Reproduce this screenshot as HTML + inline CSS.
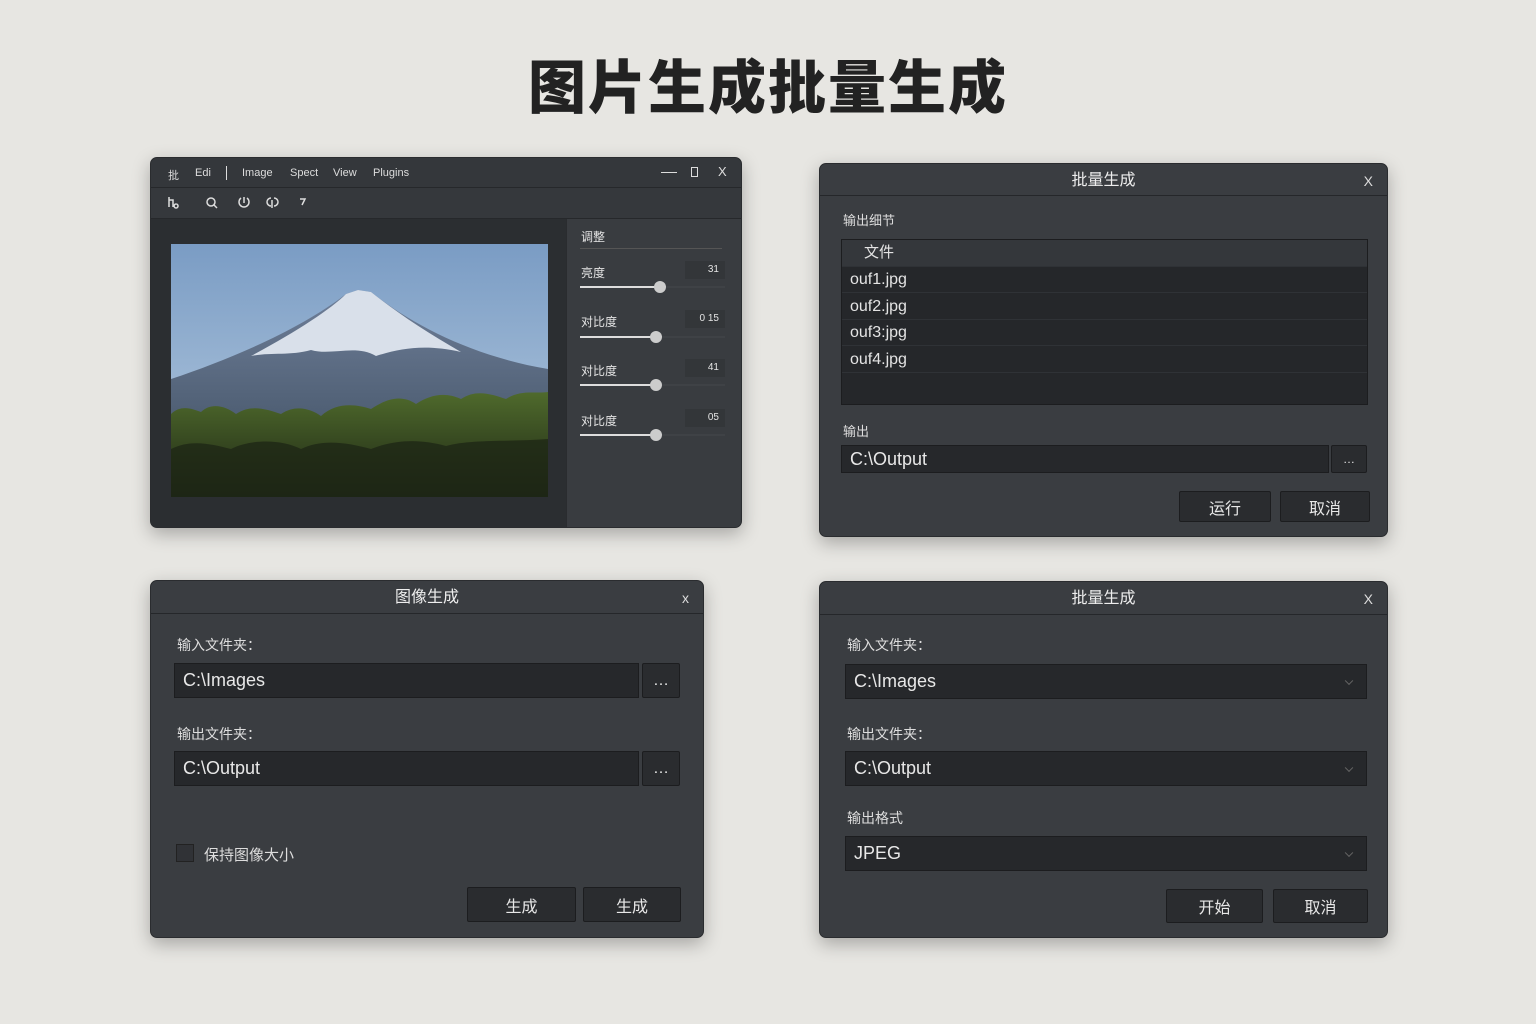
<!DOCTYPE html>
<html><head><meta charset="utf-8">
<style>
*{box-sizing:border-box;margin:0;padding:0}
body{width:1536px;height:1024px;background:#e7e6e2;position:relative;overflow:hidden;font-family:"Liberation Sans","Noto Sans CJK SC",sans-serif;color:#e4e4e4}
.a{position:absolute}
h1{position:absolute;left:0;width:1536px;top:38px;text-align:center;font-size:58px;font-weight:900;color:#222;letter-spacing:2px;font-family:"Noto Sans CJK SC",sans-serif;line-height:90px}
.win{position:absolute;background:#3a3d41;border-radius:7px;box-shadow:0 6px 18px rgba(0,0,0,.28);overflow:hidden;border:1px solid #2a2c2f}
.tb{position:absolute;left:0;right:0;top:0;border-bottom:1px solid #25272a;text-align:center;font-size:16px;color:#eee}
.x{position:absolute;right:14px;font-size:14px;color:#ddd}
.lbl{position:absolute;font-size:14px;color:#ddd}
.inp{position:absolute;background:#26282b;border:1px solid #1c1d1f;color:#e8e8e8;font-size:18px;padding-left:8px;display:flex;align-items:center}
.btn{position:absolute;background:#2a2c2f;border:1px solid #1c1d1f;color:#e8e8e8;font-size:16px;display:flex;align-items:center;justify-content:center;border-radius:2px}
.chev{position:absolute;right:14px;top:50%;width:6px;height:6px;border-right:1.5px solid #666;border-bottom:1.5px solid #666;transform:translateY(-70%) rotate(45deg)}
.row{position:absolute;left:0;right:0;height:26px;border-bottom:1px solid #2f3236;font-size:16px;padding-left:8px;line-height:26px;background:#25272a}
.sl{position:absolute;left:13px;width:145px;height:2px;background:#3f4246}
.slf{position:absolute;left:0;top:0;height:2px;background:#ddd}
.kn{position:absolute;top:-5px;width:12px;height:12px;border-radius:50%;background:#ccc}
.val{position:absolute;right:18px;width:40px;height:18px;background:#333639;font-size:10px;text-align:right;padding-right:6px;line-height:18px}
</style></head><body>
<h1>图片生成批量生成</h1>

<!-- Window 1 -->
<div class="win" style="left:150px;top:157px;width:592px;height:371px;background:#33363a">
 <div class="a" style="left:0;top:0;width:592px;height:30px;background:#34373b;border-bottom:1px solid #26282b;font-size:11px;color:#ddd">
  <span class="a" style="left:17px;top:9px">批</span><span class="a" style="left:44px;top:9px">Edi</span>
  <span class="a" style="left:75px;top:8px;width:1px;height:14px;background:#ddd"></span>
  <span class="a" style="left:91px;top:9px">Image</span><span class="a" style="left:139px;top:9px">Spect</span>
  <span class="a" style="left:182px;top:9px">View</span><span class="a" style="left:222px;top:9px">Plugins</span>
  <span class="a" style="left:510px;top:14px;width:16px;height:1px;background:#ddd"></span>
  <span class="a" style="left:540px;top:9px;width:7px;height:10px;border:1px solid #ddd"></span>
  <span class="a" style="left:567px;top:6px;font-size:13px">X</span>
 </div>
 <div class="a" style="left:0;top:30px;width:592px;height:31px;background:#35383c;border-bottom:1px solid #26282b">
  <svg class="a" style="left:15px;top:7px" width="150" height="16" stroke="#ddd" fill="none" stroke-width="1.5">
   <path d="M3 2v10M3 5h4v7M10 9a2 2 0 1 0 0.1 0"/>
   <circle cx="45" cy="7" r="4"/><path d="M48 10l3 3"/>
   <path d="M75 3a5 5 0 1 0 6 0M78 2v6"/>
   <path d="M105 3a4 4 0 0 0 0 8M108 3a4 4 0 0 1 0 8M106 5v8"/>
   <path d="M134 4h5l-3 6"/>
  </svg>
 </div>
 <div class="a" style="left:0;top:61px;width:415px;height:310px;background:#2b2e31"></div>
 <svg class="a" style="left:20px;top:86px" width="377" height="253" viewBox="0 0 377 253">
  <defs>
   <linearGradient id="sky" x1="0" y1="0" x2="0" y2="1"><stop offset="0" stop-color="#7a9cc4"/><stop offset="1" stop-color="#b6cbe0"/></linearGradient>
   <linearGradient id="mt" x1="0" y1="0" x2="0" y2="1"><stop offset="0" stop-color="#6f7f99"/><stop offset="1" stop-color="#3a4a5c"/></linearGradient>
   <linearGradient id="tr" x1="0" y1="0" x2="0" y2="1"><stop offset="0" stop-color="#4f6a2c"/><stop offset="1" stop-color="#1c2414"/></linearGradient>
  </defs>
  <rect width="377" height="253" fill="url(#sky)"/>
  <path d="M0 135 C60 115 130 85 175 50 L187 46 L200 48 C240 80 300 112 377 125 L377 253 L0 253Z" fill="url(#mt)"/>
  <path d="M80 112 C125 88 160 65 175 50 L187 46 L200 48 C225 68 255 88 290 108 C255 100 230 104 205 112 C185 100 160 112 140 106 C118 112 100 108 80 112Z" fill="#d9e0ea"/>
  <path d="M0 170 C10 160 22 165 30 168 C40 158 55 162 65 170 C80 160 95 165 110 170 C125 160 140 165 150 172 C165 158 185 160 200 165 C215 155 230 150 245 160 C260 150 275 148 290 155 C305 145 320 150 335 155 C350 145 365 150 377 148 L377 253 L0 253Z" fill="url(#tr)"/>
  <path d="M0 205 C20 195 40 200 60 205 C80 195 110 195 130 205 C150 195 175 198 200 205 C225 195 250 195 275 202 C300 195 340 198 377 195 L377 253 L0 253Z" fill="#1e2715" opacity=".8"/>
 </svg>
 <div class="a" style="left:415px;top:61px;width:177px;height:310px;background:#393c40;border-left:1px solid #2a2c2f">
  <span class="a" style="left:14px;top:9px;font-size:12px">调整</span>
  <div class="a" style="left:13px;top:29px;width:142px;height:1px;background:#555"></div>
  <span class="a" style="left:14px;top:45px;font-size:12px">亮度</span><div class="val" style="top:42px">31</div>
  <div class="sl" style="top:67px"><div class="slf" style="width:80px"></div><div class="kn" style="left:74px"></div></div>
  <span class="a" style="left:14px;top:94px;font-size:12px">对比度</span><div class="val" style="top:91px">0 15</div>
  <div class="sl" style="top:117px"><div class="slf" style="width:76px"></div><div class="kn" style="left:70px"></div></div>
  <span class="a" style="left:14px;top:143px;font-size:12px">对比度</span><div class="val" style="top:140px">41</div>
  <div class="sl" style="top:165px"><div class="slf" style="width:76px"></div><div class="kn" style="left:70px"></div></div>
  <span class="a" style="left:14px;top:193px;font-size:12px">对比度</span><div class="val" style="top:190px">05</div>
  <div class="sl" style="top:215px"><div class="slf" style="width:76px"></div><div class="kn" style="left:70px"></div></div>
 </div>
</div>

<!-- Window 2 -->
<div class="win" style="left:819px;top:163px;width:569px;height:374px">
 <div class="tb" style="height:32px;line-height:34px">批量生成<span class="x" style="top:0">X</span></div>
 <span class="lbl" style="left:23px;top:46px;font-size:13px">输出细节</span>
 <div class="a" style="left:21px;top:75px;width:527px;height:166px;background:#25272a;border:1px solid #1c1d1f">
  <div class="row" style="top:0;height:27px;background:#34373b;padding-left:22px;font-size:15px">文件</div>
  <div class="row" style="top:27px">ouf1.jpg</div>
  <div class="row" style="top:54px">ouf2.jpg</div>
  <div class="row" style="top:80px">ouf3:jpg</div>
  <div class="row" style="top:107px">ouf4.jpg</div>
 </div>
 <span class="lbl" style="left:23px;top:257px;font-size:13px">输出</span>
 <div class="inp" style="left:21px;top:281px;width:488px;height:28px">C:\Output</div>
 <div class="btn" style="left:511px;top:281px;width:36px;height:28px;font-size:12px">…</div>
 <div class="btn" style="left:359px;top:327px;width:92px;height:31px">运行</div>
 <div class="btn" style="left:460px;top:327px;width:90px;height:31px">取消</div>
</div>

<!-- Window 3 -->
<div class="win" style="left:150px;top:580px;width:554px;height:358px">
 <div class="tb" style="height:33px;line-height:34px">图像生成<span class="x" style="top:0">x</span></div>
 <span class="lbl" style="left:26px;top:54px">输入文件夹：</span>
 <div class="inp" style="left:23px;top:82px;width:465px;height:35px">C:\Images</div>
 <div class="btn" style="left:491px;top:82px;width:38px;height:35px">…</div>
 <span class="lbl" style="left:26px;top:143px">输出文件夹：</span>
 <div class="inp" style="left:23px;top:170px;width:465px;height:35px">C:\Output</div>
 <div class="btn" style="left:491px;top:170px;width:38px;height:35px">…</div>
 <div class="a" style="left:25px;top:263px;width:18px;height:18px;border:1px solid #222;background:#303236"></div>
 <span class="lbl" style="left:53px;top:263px;font-size:15px">保持图像大小</span>
 <div class="btn" style="left:316px;top:306px;width:109px;height:35px">生成</div>
 <div class="btn" style="left:432px;top:306px;width:98px;height:35px">生成</div>
</div>

<!-- Window 4 -->
<div class="win" style="left:819px;top:581px;width:569px;height:357px">
 <div class="tb" style="height:33px;line-height:34px">批量生成<span class="x" style="top:0">X</span></div>
 <span class="lbl" style="left:27px;top:53px">输入文件夹：</span>
 <div class="inp" style="left:25px;top:82px;width:522px;height:35px">C:\Images<span class="chev"></span></div>
 <span class="lbl" style="left:27px;top:142px">输出文件夹：</span>
 <div class="inp" style="left:25px;top:169px;width:522px;height:35px">C:\Output<span class="chev"></span></div>
 <span class="lbl" style="left:27px;top:226px">输出格式</span>
 <div class="inp" style="left:25px;top:254px;width:522px;height:35px">JPEG<span class="chev"></span></div>
 <div class="btn" style="left:346px;top:307px;width:97px;height:34px">开始</div>
 <div class="btn" style="left:453px;top:307px;width:95px;height:34px">取消</div>
</div>
</body></html>
